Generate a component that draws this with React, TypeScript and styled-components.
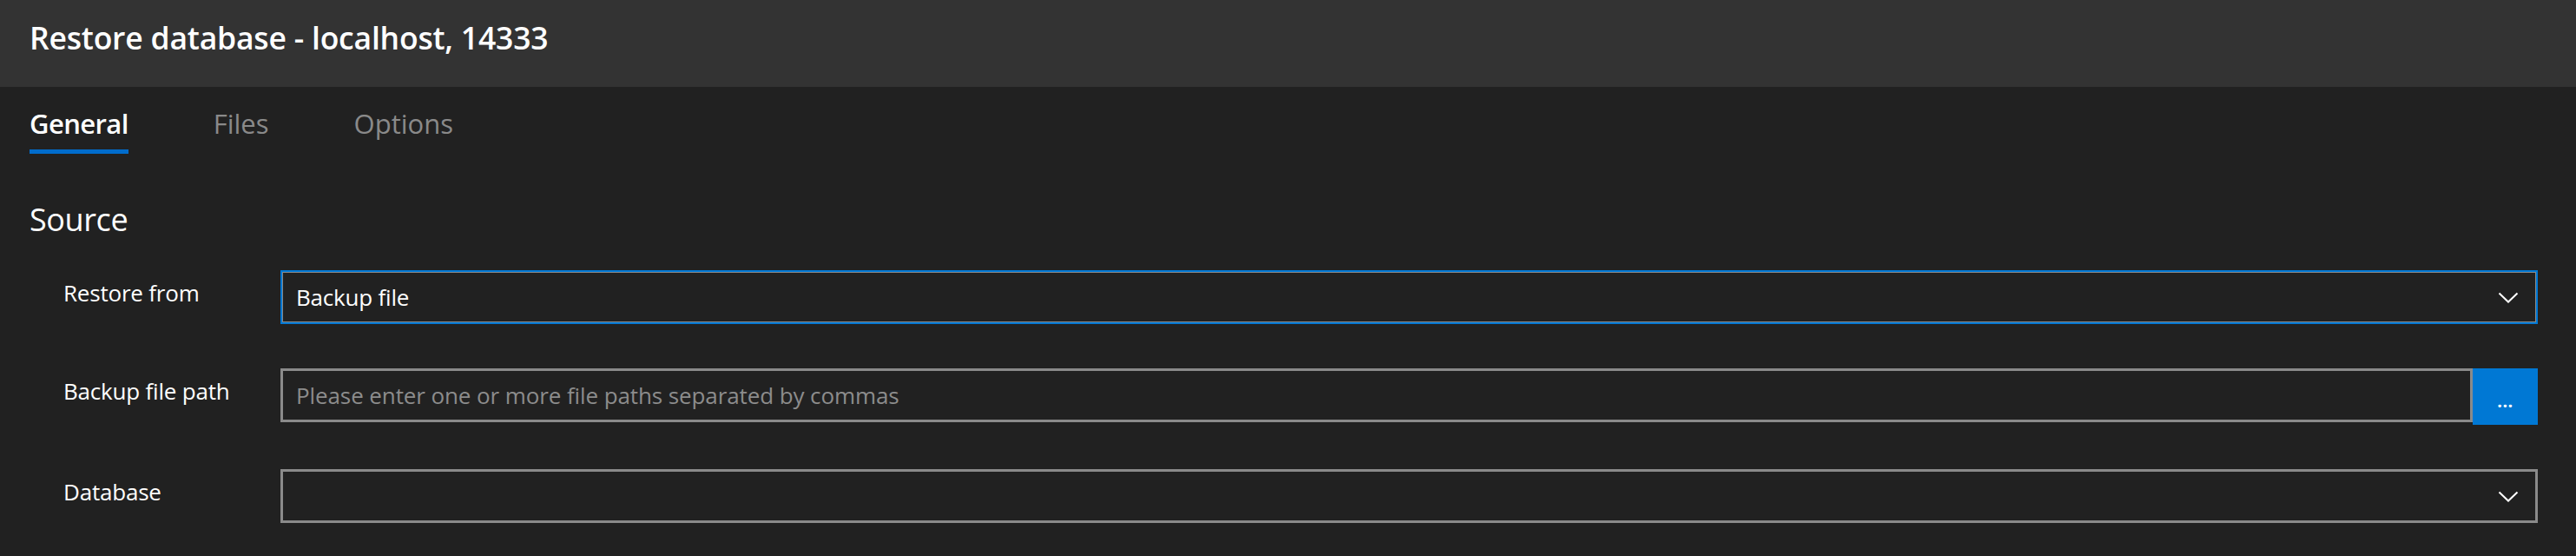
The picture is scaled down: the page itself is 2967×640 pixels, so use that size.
import React from "react";
import styled, { createGlobalStyle } from "styled-components";

const GlobalStyle = createGlobalStyle`
  html, body {
    margin: 0;
    padding: 0;
    background: #212121;
  }
  body {
    font-family: "Open Sans", "Liberation Sans", sans-serif;
    color: #ffffff;
  }
  * { box-sizing: border-box; }
`;

const Page = styled.div`
  width: 2967px;
  height: 640px;
  background: #212121;
  overflow: hidden;
`;

const Header = styled.header`
  height: 100px;
  background: #333333;
  padding: 21px 0 0 34px;
`;

const Title = styled.h1`
  margin: 0;
  font-size: 35.5px;
  line-height: 44px;
  font-weight: 600;
  color: #ffffff;
  letter-spacing: -0.2px;
`;

const TabBar = styled.nav`
  display: flex;
  gap: 98px;
  padding: 22px 0 0 34px;
`;

const Tab = styled.div<{ $active?: boolean }>`
  font-size: 31px;
  line-height: 40px;
  font-weight: ${(p) => (p.$active ? 600 : 400)};
  color: ${(p) => (p.$active ? "#ffffff" : "#8a8a8a")};
  padding-bottom: 10px;
  border-bottom: 5px solid ${(p) => (p.$active ? "#006ccc" : "transparent")};
  letter-spacing: ${(p) => (p.$active ? "-0.6px" : "0px")};
`;

const Section = styled.section`
  padding: 52px 44px 0 34px;
`;

const SectionTitle = styled.h2`
  margin: 0 0 34px 0;
  font-size: 36px;
  line-height: 48px;
  font-weight: 400;
  color: #ffffff;
  letter-spacing: -0.4px;
`;

const Form = styled.div`
  display: flex;
  flex-direction: column;
  gap: 51px;
  padding-left: 39px;
`;

const Row = styled.div`
  display: flex;
  align-items: flex-start;
`;

const Label = styled.div`
  width: 250px;
  flex: none;
  font-size: 26px;
  line-height: 52px;
  color: #ffffff;
  letter-spacing: -0.2px;
`;

const Field = styled.div`
  flex: 1;
  display: flex;
  align-items: flex-start;
`;

const Box = styled.div<{ $focused?: boolean }>`
  flex: 1;
  height: 62px;
  display: flex;
  align-items: center;
  padding: 0 19px 0 15px;
  border: 3px solid #8a8a8a;
  outline: ${(p) => (p.$focused ? "2px solid #0078d4" : "none")};
  outline-offset: -2px;
  background: #212121;
`;

const Value = styled.span<{ $placeholder?: boolean }>`
  flex: 1;
  font-size: 26px;
  line-height: 36px;
  color: ${(p) => (p.$placeholder ? "#8c8c8c" : "#ffffff")};
  letter-spacing: ${(p) => (p.$placeholder ? "-0.1px" : "-0.2px")};
  white-space: nowrap;
`;

const BrowseButton = styled.button`
  width: 75px;
  height: 65px;
  flex: none;
  border: none;
  background: #0078d4;
  color: #ffffff;
  font-family: inherit;
  font-size: 20px;
  font-weight: 700;
  line-height: 1;
  padding: 10px 0 0 0;
  display: flex;
  align-items: center;
  justify-content: center;
  letter-spacing: 0.5px;
`;

const Chevron = () => (
  <svg width="24" height="13" viewBox="0 0 24 13" fill="none">
    <polyline points="1.5,1.5 12,11.5 22.5,1.5" stroke="#ffffff" strokeWidth="2" />
  </svg>
);

export default function App() {
  return (
    <Page>
      <GlobalStyle />
      <Header>
        <Title>Restore database - localhost, 14333</Title>
      </Header>
      <TabBar>
        <Tab $active>General</Tab>
        <Tab>Files</Tab>
        <Tab>Options</Tab>
      </TabBar>
      <Section>
        <SectionTitle>Source</SectionTitle>
        <Form>
          <Row>
            <Label>Restore from</Label>
            <Field>
              <Box $focused>
                <Value>Backup file</Value>
                <Chevron />
              </Box>
            </Field>
          </Row>
          <Row>
            <Label>Backup file path</Label>
            <Field>
              <Box>
                <Value $placeholder>Please enter one or more file paths separated by commas</Value>
              </Box>
              <BrowseButton>...</BrowseButton>
            </Field>
          </Row>
          <Row>
            <Label>Database</Label>
            <Field>
              <Box>
                <Value />
                <Chevron />
              </Box>
            </Field>
          </Row>
        </Form>
      </Section>
    </Page>
  );
}
